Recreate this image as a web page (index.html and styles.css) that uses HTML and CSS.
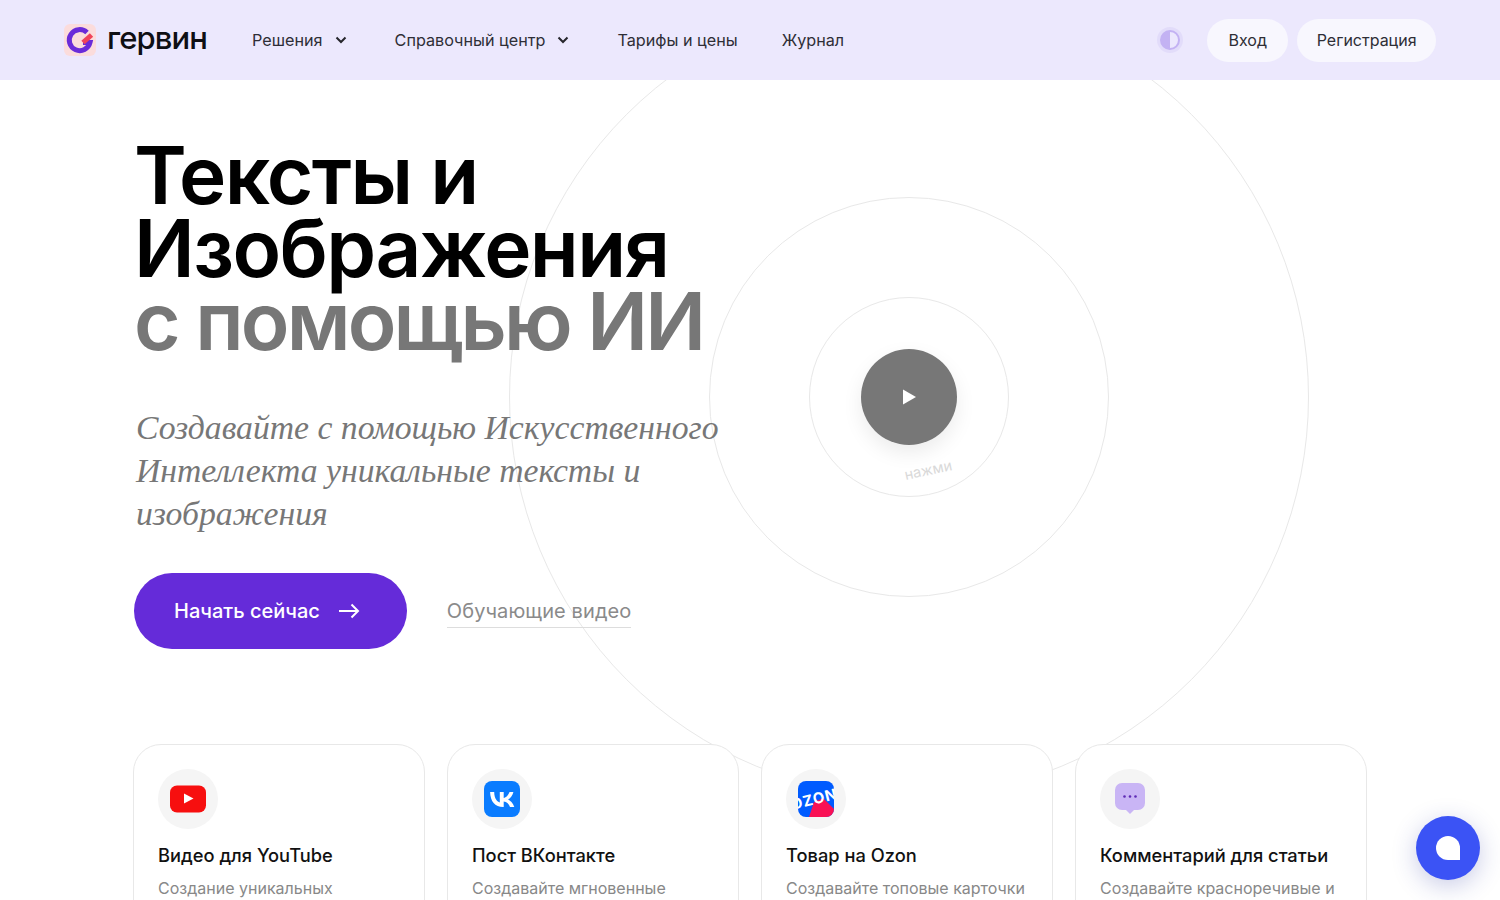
FILE: index.html
```html
<!DOCTYPE html>
<html lang="ru">
<head>
    <meta charset="UTF-8">
    <meta name="viewport" content="width=device-width, initial-scale=1.0">
    <title>Гервин</title>
    <link rel="stylesheet" href="styles.css">
</head>
<body>
    <!-- Header -->
    <header class="site-header">
        <a href="#" class="logo">
            <svg class="logo-icon" width="32" height="32" viewBox="0 0 32 32">
                <rect width="32" height="32" rx="6" fill="#fbdcdc"/>
                <path d="M23 8.500A10.500 10.500 0 1 0 26 18.500H19" fill="none" stroke="#6a2bd9" stroke-width="5"/>
                <path d="M19 18.500L27.500 11" fill="none" stroke="#f0445a" stroke-width="5"/>
            </svg>
            <span class="logo-text">гервин</span>
        </a>
        <nav class="main-nav">
            <a href="#" class="nav-link">Решения
                <svg class="chevron" width="12" height="8" viewBox="0 0 12 8"><path d="M1.500 1.500L6 6l4.500-4.500" fill="none" stroke="#26262c" stroke-width="2"/></svg>
            </a>
            <a href="#" class="nav-link">Справочный центр
                <svg class="chevron" width="12" height="8" viewBox="0 0 12 8"><path d="M1.500 1.500L6 6l4.500-4.500" fill="none" stroke="#26262c" stroke-width="2"/></svg>
            </a>
            <a href="#" class="nav-link">Тарифы и цены</a>
            <a href="#" class="nav-link">Журнал</a>
        </nav>
        <div class="header-actions">
            <button class="theme-toggle" aria-label="Тема"><span class="theme-dot"></span></button>
            <a href="#" class="pill-link pill-login">Вход</a>
            <a href="#" class="pill-link">Регистрация</a>
        </div>
    </header>

    <!-- Hero -->
    <main class="page">
        <div class="rings">
            <div class="ring ring-lg"></div>
            <div class="ring ring-md"></div>
            <div class="ring ring-sm"></div>
            <button class="play-button" aria-label="Смотреть">
                <svg width="14" height="16" viewBox="0 0 14 16"><path d="M1 .5v15L14 8z" fill="#fff"/></svg>
            </button>
            <span class="press-label">нажми</span>
        </div>

        <section class="hero">
            <h1 class="hero-title">Тексты и<br>Изображения<br><span class="hero-title-muted">с помощью ИИ</span></h1>
            <p class="hero-sub">Создавайте с помощью Искусственного Интеллекта уникальные тексты и изображения</p>
            <div class="hero-actions">
                <a href="#" class="start-button">Начать сейчас
                    <svg width="22" height="16" viewBox="0 0 22 16"><path d="M1 8h19M13.500 1.500L20 8l-6.500 6.500" fill="none" stroke="#fff" stroke-width="2"/></svg>
                </a>
                <a href="#" class="video-link">Обучающие видео</a>
            </div>
        </section>

        <!-- Cards -->
        <section class="cards">
            <article class="card">
                <div class="card-icon">
                    <svg width="36" height="28" viewBox="0 0 36 28"><rect width="36" height="27" y="0.500" rx="7" fill="#f70f0f"/><path d="M14 8.500v10l9.500-5z" fill="#fff"/></svg>
                </div>
                <h3 class="card-title">Видео для YouTube</h3>
                <p class="card-text">Создание уникальных описаний для ваших роликов</p>
            </article>
            <article class="card">
                <div class="card-icon">
                    <svg width="36" height="36" viewBox="0 0 36 36"><rect width="36" height="36" rx="8" fill="#0a7cff"/><path d="M19.200 26C11 26 6.300 20.400 6.100 11h4.100c.1 6.900 3.200 9.800 5.600 10.400V11h3.900v5.900c2.400-.3 4.900-3 5.800-5.900h3.900c-.7 3.700-3.400 6.400-5.300 7.500 1.900.9 5 3.200 6.200 7.500h-4.300c-.9-2.900-3.200-5.100-6.300-5.400V26z" fill="#fff"/></svg>
                </div>
                <h3 class="card-title">Пост ВКонтакте</h3>
                <p class="card-text">Создавайте мгновенные посты для вашей группы</p>
            </article>
            <article class="card">
                <div class="card-icon">
                    <svg width="36" height="36" viewBox="0 0 36 36">
                        <defs><clipPath id="ozonClip"><rect width="36" height="36" rx="8"/></clipPath></defs>
                        <g clip-path="url(#ozonClip)">
                            <rect width="36" height="36" fill="#005bff"/>
                            <path d="M16 21l9-4 11 11v8H11z" fill="#f91155"/>
                            <text class="ozon-text" x="16" y="23" transform="rotate(-14 18 18)">OZON</text>
                        </g>
                    </svg>
                </div>
                <h3 class="card-title">Товар на Ozon</h3>
                <p class="card-text">Создавайте топовые карточки товаров для продаж</p>
            </article>
            <article class="card">
                <div class="card-icon">
                    <svg width="30" height="32" viewBox="0 0 30 32"><path d="M7 0h16a7 7 0 0 1 7 7v13a7 7 0 0 1-7 7h-4l-4 4-4-4H7a7 7 0 0 1-7-7V7a7 7 0 0 1 7-7z" fill="#c9b5f5"/><circle cx="9.500" cy="13.500" r="1.300" fill="#5f2bb5"/><circle cx="15" cy="13.500" r="1.300" fill="#5f2bb5"/><circle cx="20.500" cy="13.500" r="1.300" fill="#5f2bb5"/></svg>
                </div>
                <h3 class="card-title">Комментарий для статьи</h3>
                <p class="card-text">Создавайте красноречивые и точные комментарии</p>
            </article>
        </section>
    </main>

    <button class="chat-button" aria-label="Чат"><span class="chat-bubble"></span></button>
</body>
</html>
```

FILE: styles.css
```css
* {
    box-sizing: border-box;
}
html, body {
    height: 900px;
    overflow: hidden;
}
body {
    margin: 0;
    font-family: Inter, "Noto Sans", sans-serif;
    background-color: #fff;
    color: #2e2e36;
}
a {
    text-decoration: none;
    color: inherit;
}
button {
    border: none;
    padding: 0;
    cursor: pointer;
}

/* Header */
.site-header {
    position: relative;
    z-index: 2;
    display: flex;
    align-items: center;
    height: 80px;
    padding: 0 64px;
    background-color: #ece8fd;
}
.logo {
    display: flex;
    align-items: center;
    gap: 11px;
    width: 188px;
}
.logo-icon {
    flex: none;
}
.logo-text {
    font-size: 31px;
    font-weight: 500;
    letter-spacing: -0.9px;
    color: #0f0f14;
    line-height: 1;
    padding-bottom: 5px;
}
.main-nav {
    display: flex;
    align-items: center;
    gap: 44px;
}
.nav-link {
    display: flex;
    align-items: center;
    gap: 12px;
    font-size: 16.2px;
}
.chevron {
    margin-right: 4px;
}
.header-actions {
    display: flex;
    align-items: center;
    gap: 9px;
    margin-left: auto;
}
.theme-toggle {
    display: flex;
    align-items: center;
    justify-content: center;
    width: 26px;
    height: 26px;
    margin-right: 15px;
    border-radius: 50%;
    background-color: #e2dcfa;
}
.theme-dot {
    width: 20px;
    height: 20px;
    border: 2px solid #c3b2f3;
    border-radius: 50%;
    background: linear-gradient(90deg, #c3b2f3 50%, #ece8fd 50%);
}
.pill-link {
    display: flex;
    align-items: center;
    justify-content: center;
    height: 43px;
    padding: 0 19.5px;
    border-radius: 22px;
    background-color: #f8f7fe;
    font-size: 16px;
}
.pill-login {
    width: 81px;
}

/* Hero */
.page {
    position: relative;
    padding: 0 133px;
}
.rings {
    position: absolute;
    top: 317px;
    left: 909px;
    width: 0;
    height: 0;
}
.ring {
    position: absolute;
    border: 1px solid #e8e8e8;
    border-radius: 50%;
    transform: translate(-50%, -50%);
}
.ring-lg {
    width: 800px;
    height: 800px;
}
.ring-md {
    width: 400px;
    height: 400px;
}
.ring-sm {
    width: 200px;
    height: 200px;
}
.play-button {
    position: absolute;
    display: flex;
    align-items: center;
    justify-content: center;
    width: 96px;
    height: 96px;
    border-radius: 50%;
    background-color: #777;
    box-shadow: 0 8px 20px rgba(0, 0, 0, 0.08);
    transform: translate(-50%, -50%);
}
.press-label {
    position: absolute;
    top: 64px;
    left: -5px;
    font-size: 14.5px;
    color: #d9d9d9;
    white-space: nowrap;
    transform: rotate(-12deg);
}
.hero {
    position: relative;
    padding-top: 58px;
}
.hero-title {
    margin: 0 0 0 1px;
    font-size: 80px;
    line-height: 73px;
    font-weight: 600;
    letter-spacing: -1.6px;
    color: #000;
}
.hero-title-muted {
    letter-spacing: -2.8px;
    color: #777;
}
.hero-sub {
    width: 600px;
    margin: 49px 0 0 3px;
    font-family: "Liberation Serif", serif;
    font-style: italic;
    font-size: 33.7px;
    line-height: 43px;
    color: #777;
}
.hero-actions {
    display: flex;
    align-items: center;
    gap: 40px;
    margin-top: 38px;
    margin-left: 1px;
}
.start-button {
    display: flex;
    align-items: center;
    gap: 18px;
    height: 76px;
    padding: 0 47px 0 40px;
    border-radius: 38px;
    background-color: #652bd9;
    color: #fff;
    font-size: 20px;
    font-weight: 500;
}
.video-link {
    padding: 4px 0;
    font-size: 20px;
    letter-spacing: 0.1px;
    color: #8a8a8a;
    border-bottom: 1px solid #ddd;
}

/* Cards */
.cards {
    position: relative;
    display: flex;
    gap: 22px;
    margin-top: 95px;
}
.card {
    flex: none;
    width: 292px;
    padding: 24px;
    border: 1px solid #e8e8e8;
    border-radius: 28px;
    background-color: #fff;
}
.card-icon {
    display: flex;
    align-items: center;
    justify-content: center;
    width: 60px;
    height: 60px;
    border-radius: 50%;
    background-color: #f5f5f5;
}
.card-title {
    margin: 14px 0 0;
    font-size: 18.3px;
    line-height: 24px;
    font-weight: 500;
    color: #111;
}
.card-text {
    margin: 10px 0 0;
    font-size: 16px;
    line-height: 22px;
    color: #888;
}
.ozon-text {
    font-family: Inter, sans-serif;
    font-size: 15px;
    font-weight: 700;
    letter-spacing: 0.8px;
    fill: #fff;
    text-anchor: middle;
}

/* Chat */
.chat-button {
    position: fixed;
    right: 20px;
    bottom: 20px;
    z-index: 3;
    display: flex;
    align-items: center;
    justify-content: center;
    width: 64px;
    height: 64px;
    border-radius: 50%;
    background-color: #3b53f5;
    box-shadow: 0 6px 24px rgba(40, 50, 160, 0.25);
}
.chat-bubble {
    width: 24px;
    height: 24px;
    background-color: #fff;
    border-radius: 12px 12px 0 12px;
}
```
